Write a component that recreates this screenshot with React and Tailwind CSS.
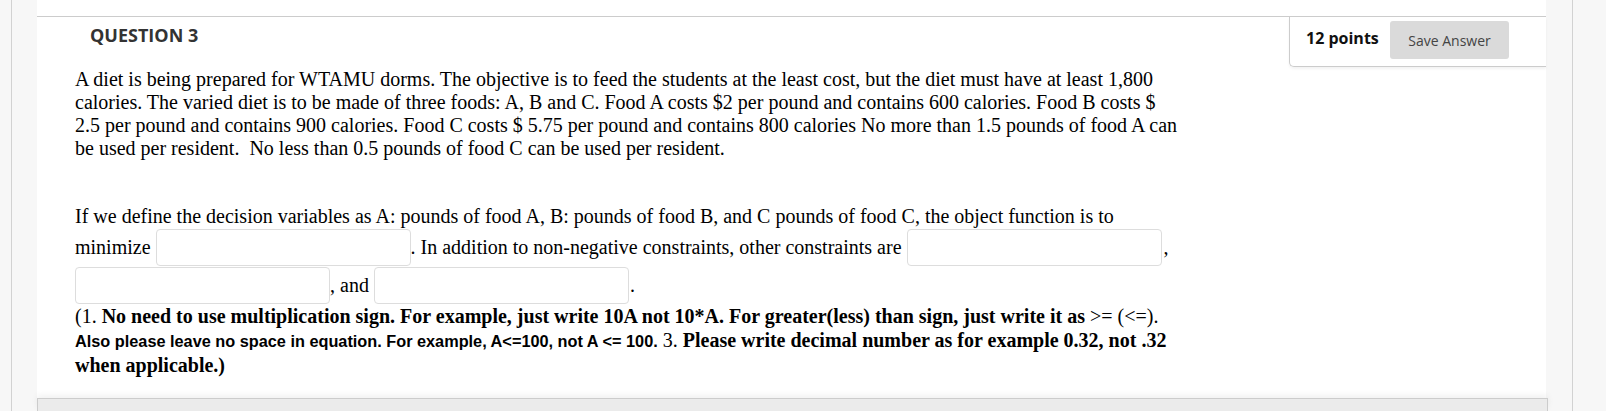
import React from "react";

// Question panel — one fill-in-the-blank question with points / save header

function Blank({ className = "" }) {
  return (
    <input
      type="text"
      className={`w-[255px] h-[37px] shrink-0 bg-white border border-[#dddddd] rounded-[4px] px-2 outline-none ${className}`}
    />
  );
}

function PointsBox() {
  return (
    <div className="w-[257px] h-[50px] border-l border-b border-[#cccccc] rounded-bl-[5px] shadow-[0_2px_3px_rgba(0,0,0,0.05)] flex items-start pl-[16px] pr-[37px] pt-[4px] bg-white">
      <span className="font-['Open_Sans',sans-serif] font-bold text-[16px] leading-[30px] text-[#111111] mt-[2px]">
        12 points
      </span>
      <button className="ml-auto w-[119px] h-[38px] bg-[#dadada] rounded-[3px] font-['Open_Sans',sans-serif] text-[14px] text-[#444444]">
        Save Answer
      </button>
    </div>
  );
}

export default function App() {
  return (
    <div className="w-[1606px] h-[411px] overflow-hidden bg-[#f7f7f7] flex">
      <div className="w-[11px] shrink-0" />
      <div className="w-px shrink-0 bg-[#d2d2d2]" />
      <div className="w-[25px] shrink-0" />

      <div className="w-[1509px] shrink-0 flex flex-col">
        <div className="h-4 bg-white" />
        <div className="h-[382px] bg-white border-t border-[#cccccc] flex flex-col">
          {/* header */}
          <div className="h-[51px] flex items-start justify-between">
            <h2 className="pl-[53px] pt-[6px] font-['Open_Sans',sans-serif] font-bold text-[18px] leading-[24px] text-[#333333]">
              QUESTION 3
            </h2>
            <PointsBox />
          </div>

          {/* question body */}
          <div className="pl-[38px] font-['Liberation_Serif','Times_New_Roman',serif] text-[20px] leading-[23px] text-black whitespace-nowrap">
            <p>
              A diet is being prepared for WTAMU dorms. The objective is to feed the students at the least cost, but the diet must have at least 1,800
              <br />
              calories. The varied diet is to be made of three foods: A, B and C. Food A costs $2 per pound and contains 600 calories. Food B costs $
              <br />
              2.5 per pound and contains 900 calories. Food C costs $ 5.75 per pound and contains 800 calories No more than 1.5 pounds of food A can
              <br />
              be used per resident.&nbsp; No less than 0.5 pounds of food C can be used per resident.
            </p>

            <p className="mt-[45px]">
              If we define the decision variables as A: pounds of food A, B: pounds of food B, and C pounds of food C, the object function is to
            </p>
            <div className="h-[38px] flex items-center whitespace-pre">
              <span>minimize </span>
              <Blank />
              <span>. In addition to non-negative constraints, other constraints are </span>
              <Blank />
              <span className="ml-[2px]">,</span>
            </div>
            <div className="h-[38px] flex items-center whitespace-pre">
              <Blank />
              <span>, and </span>
              <Blank />
              <span className="ml-[1px]">.</span>
            </div>

            <div className="leading-[24px]">
              <p>
                (1. <b>No need to use multiplication sign. For example, just write 10A not 10*A. For greater(less) than sign, just write it as</b> &gt;= (&lt;=).
              </p>
              <p>
                <b className="font-['Liberation_Sans',Arial,sans-serif] text-[16.3px]">
                  Also please leave no space in equation. For example, A&lt;=100, not A &lt;= 100.
                </b>{" "}
                3. <b>Please write decimal number as for example 0.32, not .32</b>
              </p>
              <p>
                <b>when applicable.)</b>
              </p>
            </div>
          </div>
        </div>
        <div className="w-[1511px] h-[13px] bg-[#ebebeb] border-t border-l border-r border-[#cccccc] shadow-[0_-3px_6px_rgba(0,0,0,0.06)]" />
      </div>

      <div className="w-[26px] shrink-0" />
      <div className="w-px shrink-0 bg-[#d2d2d2]" />
      <div className="flex-1" />
    </div>
  );
}
